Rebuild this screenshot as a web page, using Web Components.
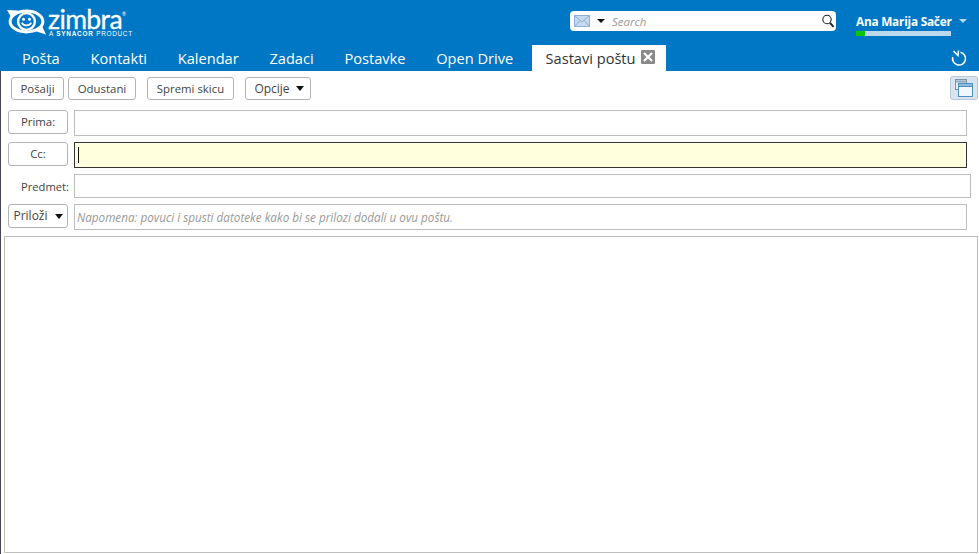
<!DOCTYPE html>
<html lang="hr">
<head>
<meta charset="utf-8">
<title>Zimbra</title>
<style>
  html, body { margin: 0; height: 100%; background: #fff; overflow: hidden; }
  body { font-family: "Open Sans", "Noto Sans", sans-serif; color: #333; }
</style>
</head>
<body>
<z-app></z-app>
<script>
(function(){
    const FONT = '"Open Sans", "Noto Sans", sans-serif';

    class ZLogo extends HTMLElement {
        constructor() {
            super();
            this.attachShadow({mode: "open"}).innerHTML = `
                <style>
                :host { display: flex; align-items: flex-start; width: 135px; height: 45px; color: #fff; }
                svg { flex: none; margin: 9px 0 0 6px; }
                .words { display: flex; flex-direction: column; margin: 8px 0 0 0; }
                .name { font: 400 26.5px/23px "Lato", sans-serif; letter-spacing: -0.6px; -webkit-text-stroke: .3px #fff; }
                .sub { font: 400 6.4px/6px "Liberation Sans", sans-serif; letter-spacing: .72px; margin-left: 1px; white-space: nowrap; }
                .sub b { font-weight: 700; letter-spacing: .8px; }
                sup { font-size: 5px; line-height: 0; vertical-align: 13px; letter-spacing: 0; -webkit-text-stroke: 0; }
                </style>
                <svg width="42" height="27" viewBox="0 0 42 27" fill="none" stroke="#fff">
                    <ellipse cx="20.5" cy="12.5" rx="16.4" ry="10.4" stroke-width="3"/>
                    <path d="M1 1 L12 1.5 L5 8 Z" fill="#fff" stroke-width="0"/>
                    <path d="M40 25.5 L29 22 L36 17 Z" fill="#fff" stroke-width="0"/>
                    <circle cx="20.5" cy="12.5" r="8.4" fill="#0077c4" stroke-width="2.4"/>
                    <circle cx="17.5" cy="10.2" r="1.5" fill="#fff" stroke-width="0"/>
                    <circle cx="23.5" cy="10.2" r="1.5" fill="#fff" stroke-width="0"/>
                    <path d="M15.8 13.6 C17.5 17.4 23.5 17.4 25.2 13.6" stroke-width="1.7"/>
                </svg>
                <div class="words">
                    <span class="name">zimbra<sup>®</sup></span>
                    <span class="sub">A <b>SYNACOR</b> PRODUCT</span>
                </div>`;
        }
    }

    class ZSearch extends HTMLElement {
        constructor() {
            super();
            this.attachShadow({mode: "open"}).innerHTML = `
                <style>
                :host { display: flex; align-items: center; box-sizing: border-box; width: 266px; height: 20px; background: #fff; border-radius: 4px; padding: 0 1px 0 4px; }
                .mail { flex: none; }
                .caret { flex: none; width: 0; height: 0; border: 4px solid transparent; border-top: 4px solid #111; border-bottom: 0; margin: 0 7px 0 7px; }
                .hint { flex: 1; font: italic 11.5px "Open Sans", sans-serif; color: #999; }
                </style>
                <svg class="mail" width="16" height="12" viewBox="0 0 16 12">
                    <rect x=".5" y=".5" width="15" height="11" fill="#c5daf0" stroke="#8fb0d2"/>
                    <path d="M1 1 L8 7 L15 1 M1 11 L6 5.5 M15 11 L10 5.5" fill="none" stroke="#8fb0d2"/>
                </svg>
                <span class="caret"></span>
                <span class="hint">Search</span>
                <svg width="13" height="14" viewBox="0 0 13 14" fill="none" stroke="#222">
                    <circle cx="5" cy="5.5" r="4.2" stroke-width="1.1"/>
                    <path d="M8 8.8 L11.6 12.8" stroke-width="2"/>
                </svg>`;
        }
    }

    class ZUser extends HTMLElement {
        constructor() {
            super();
            this.attachShadow({mode: "open"}).innerHTML = `
                <style>
                :host { display: grid; grid-template-columns: 95px auto; column-gap: 8px; width: 111px; color: #fff; }
                .name { font: 700 11.8px/17px "Open Sans", sans-serif; white-space: nowrap; letter-spacing: -.22px; }
                .caret { width: 0; height: 0; border: 4px solid transparent; border-top: 4px solid #b9d8ee; border-bottom: 0; margin-top: 6px; }
                .quota { height: 5px; background: #bcd9ec; margin-top: 1px; }
                .quota div { width: 9px; height: 100%; background: #0fc40f; }
                </style>
                <span class="name">Ana Marija Sačer</span>
                <span class="caret"></span>
                <div class="quota"><div></div></div>`;
        }
    }

    class ZTab extends HTMLElement {
        constructor() {
            super();
            this.attachShadow({mode: "open"}).innerHTML = `
                <style>
                :host { display: flex; align-items: center; gap: 5px; height: 26px; padding: 0 15.4px; font: 400 14.6px/26px ${FONT}; color: #fff; white-space: nowrap; }
                :host([active]) { background: #fff; color: #333; padding: 0 11px 0 14px; margin-left: 3px; }
                .close { display: none; }
                :host([active]) .close { display: block; margin-top: -3px; }
                </style>
                <slot></slot>
                <svg class="close" width="14" height="14" viewBox="0 0 14 14">
                    <rect width="14" height="14" rx="1" fill="#8a8a8a"/>
                    <path d="M3 3 L11 11 M11 3 L3 11" stroke="#fff" stroke-width="2.2"/>
                </svg>`;
        }
    }

    class ZButton extends HTMLElement {
        constructor() {
            super();
            this.attachShadow({mode: "open"}).innerHTML = `
                <style>
                :host { display: flex; align-items: center; justify-content: center; gap: 7px; box-sizing: border-box; height: 24px; border: 1px solid #b4b4b4; border-radius: 3px; background: #fff; font: 400 11.4px/20px ${FONT}; color: #444; white-space: nowrap; }
                :host([menu]) { font-size: 12px; }
                .caret { display: none; width: 0; height: 0; border: 4px solid transparent; border-top: 5px solid #111; border-bottom: 0; }
                :host([menu]) .caret { display: block; }
                </style>
                <slot></slot>
                <span class="caret"></span>`;
        }
    }

    class ZField extends HTMLElement {
        constructor() {
            super();
            this.attachShadow({mode: "open"}).innerHTML = `
                <style>
                :host { display: flex; align-items: center; box-sizing: border-box; height: 26px; border: 1px solid #bdbdbd; background: #fff; padding: 0 2px; font: italic 11.7px ${FONT}; color: #999; white-space: nowrap; overflow: hidden; }
                :host([focused]) { border-color: #333; background: #ffffdd; }
                .cursor { display: none; width: 1px; height: 16px; background: #111; margin-left: 1px; }
                :host([focused]) .cursor { display: block; }
                </style>
                <span class="cursor"></span>
                <slot></slot>`;
        }
    }

    class ZCompose extends HTMLElement {
        constructor() {
            super();
            this.attachShadow({mode: "open"}).innerHTML = `
                <style>
                :host { display: grid; grid-template-columns: 60px 1fr; column-gap: 6px; padding: 0 8px 0 7px; row-gap: 6px; }
                z-button { width: 60px; }
                .label { display: flex; align-items: center; justify-content: flex-end; font: 400 11.2px ${FONT}; color: #444; margin-right: -1px; }
                .fill { margin-right: 4px; }
                .subject { height: 24px; margin-right: 0; }
                </style>
                <z-button>Prima:</z-button><z-field class="fill"></z-field>
                <z-button>Cc:</z-button><z-field class="fill" focused></z-field>
                <span class="label">Predmet:</span><z-field class="subject"></z-field>
                <z-button menu>Priloži</z-button><z-field class="fill">Napomena: povuci i spusti datoteke kako bi se prilozi dodali u ovu poštu.</z-field>`;
        }
    }

    class ZApp extends HTMLElement {
        constructor() {
            super();
            this.attachShadow({mode: "open"}).innerHTML = `
                <style>
                :host { display: flex; flex-direction: column; height: 554px; width: 979px; }
                header { background: #0077c4; height: 71px; display: flex; flex-direction: column; flex: none; }
                .top { display: flex; align-items: flex-start; height: 45px; }
                z-search { margin: 11px 0 0 435px; }
                z-user { margin: 13px 0 0 20px; }
                .tabs { display: flex; padding-left: 6.5px; align-items: flex-end; }
                .refresh { align-self: flex-start; margin: 4px 0 0 auto; padding-right: 12px; }
                main { flex: 1; display: flex; flex-direction: column; border-left: 1px solid #445; }
                .bar { display: flex; height: 39px; box-sizing: border-box; padding: 6px 1px 0 10px; flex: none; }
                .bar z-button { height: 23px; }
                .view { box-sizing: border-box; margin: -1px 0 0 auto; width: 28px; height: 24px; background: #d9e4ee; border: 1px solid #b9c9d8; border-radius: 3px; display: flex; align-items: center; justify-content: center; }
                .body { box-sizing: border-box; flex: 1; margin: 6px 1px 1px 3px; border: 1px solid #bdbdbd; }
                </style>
                <header>
                    <div class="top">
                        <z-logo></z-logo>
                        <z-search></z-search>
                        <z-user></z-user>
                    </div>
                    <div class="tabs">
                        <z-tab>Pošta</z-tab>
                        <z-tab>Kontakti</z-tab>
                        <z-tab>Kalendar</z-tab>
                        <z-tab>Zadaci</z-tab>
                        <z-tab>Postavke</z-tab>
                        <z-tab>Open Drive</z-tab>
                        <z-tab active>Sastavi poštu</z-tab>
                        <svg class="refresh" width="16" height="18" viewBox="0 0 16 18" fill="none" stroke="#fff" stroke-width="1.6">
                            <path d="M9.5 3.2 A6.5 6.5 0 1 1 1.7 8"/>
                            <path d="M2.5 2 L7 6.5 L7.5 1.5" stroke-width="1.5"/>
                        </svg>
                    </div>
                </header>
                <main>
                    <div class="bar">
                        <z-button style="width:53px">Pošalji</z-button>
                        <z-button style="width:68px;margin-left:4px">Odustani</z-button>
                        <z-button style="width:87px;margin-left:11px">Spremi skicu</z-button>
                        <z-button menu style="width:66px;margin-left:11px;gap:6px;padding-left:2px">Opcije</z-button>
                        <div class="view">
                            <svg width="18" height="18" viewBox="0 0 18 18" fill="#eef4fa" stroke="#7d93a8">
                                <rect x=".5" y=".5" width="11" height="10"/>
                                <rect x=".5" y=".5" width="11" height="2.5" fill="#b3c3d2"/>
                                <rect x="3.5" y="4.5" width="14" height="13" fill="#f2f7fc" stroke="#4f8fc0"/>
                                <rect x="3.5" y="4.5" width="14" height="3" fill="#8dbce0" stroke="#4f8fc0"/>
                            </svg>
                        </div>
                    </div>
                    <z-compose></z-compose>
                    <div class="body"></div>
                </main>`;
        }
    }

    customElements.define("z-logo", ZLogo);
    customElements.define("z-search", ZSearch);
    customElements.define("z-user", ZUser);
    customElements.define("z-tab", ZTab);
    customElements.define("z-button", ZButton);
    customElements.define("z-field", ZField);
    customElements.define("z-compose", ZCompose);
    customElements.define("z-app", ZApp);
})();
</script>
</body>
</html>
